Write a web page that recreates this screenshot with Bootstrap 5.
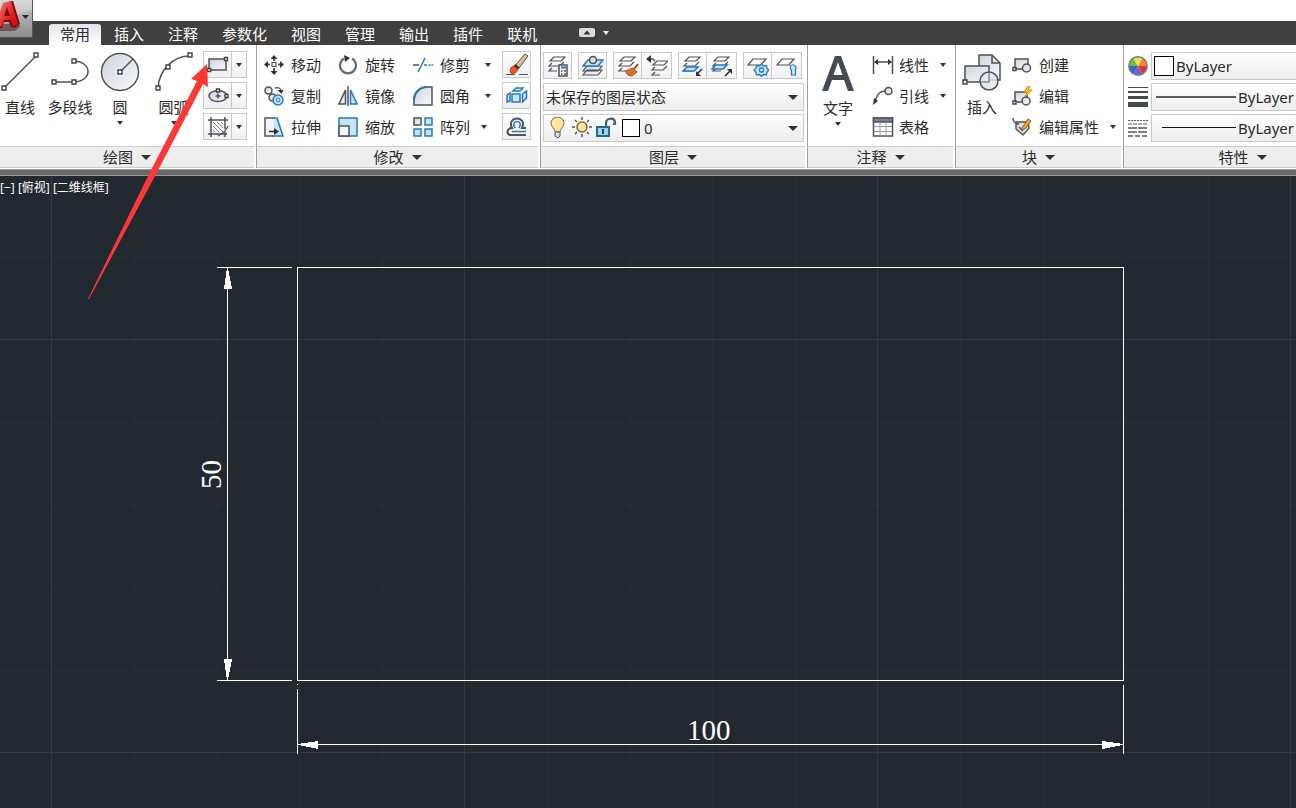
<!DOCTYPE html>
<html lang="zh-CN">
<head>
<meta charset="utf-8">
<meta name="viewport" content="width=device-width, initial-scale=1">
<title>CAD</title>
<link href="https://cdn.jsdelivr.net/npm/bootstrap@5.3.0/dist/css/bootstrap.min.css" rel="stylesheet">
<style>
body{font-family:"Noto Sans","Noto Sans CJK SC",sans-serif;font-size:15px;line-height:20px;color:#2b2b2b;background:#fff}
.app-btn{position:absolute;left:0;top:0;width:33px;height:38px;padding:0;border:0;border-right:1px solid #555;border-bottom:1px solid #555;background:linear-gradient(#c9c9c9,#8d8d8d);z-index:3;overflow:hidden}
.titlebar{height:21px}
.tabbar{background:#404040;height:24px;padding-left:49px}
.tabbar .nav-link{color:#fff;padding:3px 12px 1px;line-height:20px;white-space:nowrap}
.tabbar .nav-link.active{color:#2b2b2b;background:linear-gradient(#e2e4e8,#fff);border-radius:3px 3px 0 0;padding:0 11px 1px;margin:3px 1px 0 0;height:21px}
.ribbon{height:124px;overflow:hidden;background:#fff}
.panel{border-right:1px solid #a0a0a0;height:123px;flex-shrink:0}
.panel-main{height:101px;padding-top:6px}
.panel-title{height:22px;background:#eee;border:0;border-top:1px solid #ccc;border-bottom:1px solid #ccc;color:#2b2b2b;padding:0;margin-right:2px;display:flex;align-items:center;justify-content:center;gap:8px}
.p-draw{width:257px}.p-mod{width:284px}.p-layer{width:267px}.p-note{width:148px}.p-block{width:168px}.p-prop{min-width:240px}
.tool{border:0;background:none;padding:0;color:inherit;display:flex;align-items:center;white-space:nowrap;height:27px}
.tool svg.ic{margin-right:7px}
.tool svg.wide{margin-right:5px}
.tool .caret{margin-left:15px}
.tool .caret.near{margin-left:11px}
.big{border:0;background:none;padding:0;color:inherit;display:flex;flex-direction:column;align-items:center;height:80px;white-space:nowrap}
.big .lbl{margin:5px 0 4px}
.w40{width:40px}.w52{width:52px}.w60{width:60px}.w63{width:63px}
.rows{display:flex;flex-direction:column;gap:4px}
.mod-grid{display:grid;grid-template-columns:74px 75px 89px 29px;grid-auto-rows:27px;row-gap:4px;padding-left:7px}
.box{border:1px solid #c9c9c9;border-radius:0;background:linear-gradient(#fff,#f0f0f0);padding:0;height:27px;width:29px;display:flex;align-items:center;justify-content:center}
.pair{display:flex}
.pair .box + .box{margin-left:-1px;width:31px}
.pair .box + .narrow{width:16px}
.field{border:1px solid #c9c9c9;background:linear-gradient(#fff,#ededed);height:28px;display:flex;align-items:center}
.field select{appearance:none;border:0;outline:0;background:none;color:inherit;height:26px;padding:0 2px;min-width:0;flex:1 1 auto;line-height:20px}
.drop select{background:url("data:image/svg+xml,%3Csvg xmlns='http://www.w3.org/2000/svg' width='10' height='5'%3E%3Cpath d='M0 0h10L5 5z' fill='%23333'/%3E%3C/svg%3E") no-repeat right 5px center}
.layers{padding:7px 3px 0 2px;gap:3px}
.layer-tools{display:flex;justify-content:space-between;height:28px;padding-right:2px}
.prop-row{display:flex;align-items:center;gap:3px}
.swatch{border:1px solid #000;background:#fff;width:20px;height:20px;flex:none;margin-left:2px}
.swatch.sm{width:18px;height:18px;margin-left:4px}
.frame{height:7px;background:#686868;border-top:1px solid #999;border-bottom:1px solid #999}
.canvas{background:#222830;overflow:hidden}
.canvas text{fill:#fff;font-family:"Liberation Serif",serif;font-size:29px}
.view-label{position:absolute;left:0;top:3px;color:#fff;font-size:12px;line-height:18px;white-space:nowrap}
.pointer{position:absolute;left:0;top:0;z-index:5;pointer-events:none}
.ic{flex:none;fill:none;stroke:#4c525b;stroke-width:1.5}
.caret{flex:none;fill:#333}
.nd{fill:#fff;stroke:#3e444d;stroke-width:1.4}
.sh{fill:url(#gs)}
.bl{stroke:#2479bd}
.bf{stroke:#2479bd;fill:#c6e5f8}
.dk{fill:#333;stroke:none}
</style>
</head>
<body class="vh-100 d-flex flex-column overflow-hidden position-relative">
<svg width="0" height="0" class="position-absolute" aria-hidden="true">
<defs>
<linearGradient id="gs" x1="0" y1="0" x2="1" y2="1"><stop offset="0" stop-color="#cfd3dc"/><stop offset="1" stop-color="#fafafc"/></linearGradient>
<linearGradient id="gr" x1="0" y1="0" x2="1" y2="1"><stop offset="0" stop-color="#f4726a"/><stop offset=".6" stop-color="#dc2022"/><stop offset="1" stop-color="#c60d12"/></linearGradient>
<symbol id="c" viewBox="0 0 6 4"><path d="M0 0h6L3 4z"/></symbol>
<symbol id="C" viewBox="0 0 10 5"><path d="M0 0h10L5 5z"/></symbol>
<symbol id="stack" viewBox="0 0 22 22"><path d="M7 2h11l-4 4H3zM5 8l-3 3h11l4-4M5 13l-3 3h8" stroke-width="1.2"/></symbol>
</defs>
</svg>

<button class="app-btn" aria-label="应用程序菜单"><svg width="32" height="37" viewBox="0 0 32 37" class="d-block"><path d="M0 22C12 20 18 12 32 10V0H0z" fill="#fff" opacity=".28"/><path d="M0 31l15 0 6-5-6-2H0z" fill="#3c1515" opacity=".5"/><path d="M10 1h3l7 23-5 4-4-1-2-5H4l-2 6H0V12z" fill="#86070b"/><path fill-rule="evenodd" d="M3 3l8-2 7 23-5 2-2-6H4l-2 6-2 1V12zM4 16h6L7 7z" fill="url(#gr)"/><path d="M22 15h7l-3.500 4z" fill="#25292e"/></svg></button>
<div class="titlebar flex-shrink-0"></div>
<nav class="tabbar flex-shrink-0 d-flex" aria-label="功能区">
<div class="nav flex-nowrap">
<a class="nav-link active" href="#">常用</a><a class="nav-link" href="#">插入</a><a class="nav-link" href="#">注释</a><a class="nav-link" href="#">参数化</a><a class="nav-link" href="#">视图</a><a class="nav-link" href="#">管理</a><a class="nav-link" href="#">输出</a><a class="nav-link" href="#">插件</a><a class="nav-link" href="#">联机</a>
</div>
<button class="tool ms-4 ps-1 h-100" aria-label="最小化"><svg width="34" height="12" viewBox="0 0 34 12"><rect x="2" y="1" width="16" height="9" rx="2" fill="#dcdde3"/><path d="M6.500 7.500h7L10 3.500z" fill="#333"/><path d="M26 4h6l-3 4z" fill="#eee"/></svg></button>
</nav>

<main class="ribbon flex-shrink-0 d-flex">
<section class="panel p-draw d-flex flex-column">
<div class="panel-main d-flex">
<button class="big w40"><svg class="ic" width="40" height="41" viewBox="0 0 40 41"><path d="M4 37L36 5"/><path class="nd" d="M2 35h4v4H2zM34 2h4v4h-4z"/></svg><span class="lbl">直线</span></button>
<button class="big w60"><svg class="ic" width="42" height="41" viewBox="0 0 42 41"><path d="M4 31h20c20 0 20-21 0-21"/><path class="nd" d="M3 29h4v4H3zM23 29h4v4h-4zM23 8h4v4h-4z"/></svg><span class="lbl">多段线</span></button>
<button class="big w40"><svg class="ic" width="40" height="41" viewBox="0 0 40 41"><circle class="sh" cx="20" cy="21" r="18.500"/><path d="M20 21L33 8"/><path class="nd" d="M18 19h4v4h-4z"/></svg><span class="lbl">圆</span><svg class="caret" width="6" height="4"><use href="#c"/></svg></button>
<button class="big w63"><svg class="ic ms-1" width="40" height="41" viewBox="0 0 40 41"><path d="M4 37C5 20 18 5 36 5"/><path class="nd" d="M2 35h4v4H2zM12 14h4v4h-4zM34 2h4v4h-4z"/></svg><span class="lbl ms-1">圆弧</span><svg class="caret ms-1" width="6" height="4"><use href="#c"/></svg></button>
<div class="rows">
<div class="pair"><button class="box" aria-label="矩形"><svg class="ic" width="22" height="20" viewBox="0 0 22 20"><path class="sh" d="M2 4h17v11H2z"/><path class="nd" d="M17.500 2.500h3v3h-3zM.7 13.500h3v3h-3z"/></svg></button><button class="box narrow" aria-label="矩形选项"><svg class="caret" width="6" height="4"><use href="#c"/></svg></button></div>
<div class="pair"><button class="box" aria-label="椭圆"><svg class="ic" width="22" height="20" viewBox="0 0 22 20"><ellipse class="sh" cx="11" cy="10" rx="9" ry="5.500"/><path d="M8.500 10h5M11 7.500v5"/><path class="nd" d="M9.500 3h3v3h-3zM18 8.500h3v3h-3z"/></svg></button><button class="box narrow" aria-label="椭圆选项"><svg class="caret" width="6" height="4"><use href="#c"/></svg></button></div>
<div class="pair"><button class="box" aria-label="图案填充"><svg class="ic" width="22" height="20" viewBox="0 0 22 20"><path d="M1 3h20M1 17h19M4 0v20M18 0v12M18 15v5"/><path d="M6 5l10 10M10 5l6 6M6 9l6 6M14 5l2 2M6 13l2 2" stroke-width=".7"/><path d="M21 9c-2 5-6 8-10 10" stroke-width="1.200"/></svg></button><button class="box narrow" aria-label="填充选项"><svg class="caret" width="6" height="4"><use href="#c"/></svg></button></div>
</div>
</div>
<button class="panel-title">绘图<svg class="caret" width="10" height="5"><use href="#C"/></svg></button>
</section>

<section class="panel p-mod d-flex flex-column">
<div class="panel-main"><div class="mod-grid">
<button class="tool"><svg class="ic" width="20" height="20" viewBox="0 0 20 20"><path d="M8 7.500h4v4H8z" stroke-width="1.200"/><path d="M10 3v3M10 13v4M3 9.500h3M14 9.500h3" stroke-width="2"/><path class="dk" d="M6.500 4h7L10 0zM6.500 16h7L10 20zM4 6v7L0 9.500zM16 6v7l4-3.500z"/></svg>移动</button>
<button class="tool"><svg class="ic" width="20" height="20" viewBox="0 0 20 20"><path d="M6 3.500a8 8 0 1 0 8 0" stroke-width="2.200" stroke="#666b72"/><path class="dk" d="M6 0l6 3-5 4z"/></svg>旋转</button>
<button class="tool"><svg class="ic" width="20" height="20" viewBox="0 0 20 20"><path d="M0 10h6"/><path class="bl" d="M5 17L12 3M11 10h3m1.500 0h2m1 0h2"/></svg>修剪<svg class="caret" width="6" height="4"><use href="#c"/></svg></button>
<button class="box" aria-label="删除"><svg class="ic" width="24" height="24" viewBox="0 0 24 24"><path d="M1 21.500h9M14 21.500h9" stroke-width="1"/><path d="M10.500 12L20 1l3 2-9 12z" fill="#e2be8d" stroke-width="1"/><path d="M9.500 12l4.500 3.500" stroke="#333" stroke-width="2.400"/><path d="M8.500 13l4.500 3.500c-1 3-4 4.500-7 3.500-2-3 0-6 2.500-7z" fill="#e8562a" stroke="#b6330c" stroke-width="1"/></svg></button>
<button class="tool"><svg class="ic wide" width="22" height="20" viewBox="0 0 22 20"><circle class="sh" cx="4.500" cy="4.500" r="3.500"/><circle class="sh" cx="8.500" cy="11.500" r="3.500"/><circle class="bf" cx="14" cy="14" r="5"/><circle class="bl" cx="14" cy="14" r="2" stroke-width="1"/><path d="M11 2c4-1 5 0 6 2"/><path class="dk" d="M13.500 4h6l-2 4z"/></svg>复制</button>
<button class="tool"><svg class="ic" width="20" height="20" viewBox="0 0 20 20"><path class="sh" d="M7.500 4v14H1z"/><path d="M10 0v20"/><path class="bf" d="M12.500 4v14H19z"/></svg>镜像</button>
<button class="tool"><svg class="ic" width="20" height="20" viewBox="0 0 20 20"><path class="sh" d="M1 19V12C3 6 7 2 12 1h7v18z"/><path class="bl" d="M1 14C1 6 7 1 14 1" stroke-width="2"/></svg>圆角<svg class="caret" width="6" height="4"><use href="#c"/></svg></button>
<button class="box" aria-label="分解"><svg class="ic" width="22" height="20" viewBox="0 0 22 20"><path class="bf" d="M6 8h8v8H6zM7 5l3-3h7l-3 3zM16.500 8l4-3v7l-4 4zM1 9l3-2v8l-3 1z" stroke-width="1.500"/></svg></button>
<button class="tool"><svg class="ic" width="20" height="20" viewBox="0 0 20 20"><path class="bf" d="M9 1h4l6 18H9z"/><path fill="#f4f5f8" stroke="none" d="M1 1h9v18H1z"/><path d="M10 1H1v18h9"/><path d="M5 14.500h6" stroke="#222"/><path class="dk" d="M10 11l5 3.500-5 3.500z"/></svg>拉伸</button>
<button class="tool"><svg class="ic" width="20" height="20" viewBox="0 0 20 20"><path class="bf" d="M1 1h18v18H1z"/><path fill="#f6f7fa" d="M1 9h10v10H1z"/></svg>缩放</button>
<button class="tool"><svg class="ic" width="20" height="20" viewBox="0 0 20 20"><path class="sh" d="M1 1h7v7H1z"/><path class="bf" d="M12 1h7v7h-7zM1 12h7v7H1zM12 12h7v7h-7z"/></svg>阵列<svg class="caret near" width="6" height="4"><use href="#c"/></svg></button>
<button class="box" aria-label="偏移"><svg class="ic" width="22" height="20" viewBox="0 0 22 20"><path d="M20 18H4c-4-1-3-7 2-7C3 5 7 1.500 11 1.500s8 3.500 5 9.500h4" stroke-width="2"/><path class="bl" d="M20 14.500H6M9 11C6 6 9 4.500 11 4.500S16 6 13 11" /></svg></button>
</div></div>
<button class="panel-title">修改<svg class="caret" width="10" height="5"><use href="#C"/></svg></button>
</section>

<section class="panel p-layer d-flex flex-column">
<div class="panel-main d-flex flex-column layers">
<div class="layer-tools">
<button class="box" aria-label="图层特性"><svg class="ic" width="22" height="22"><use href="#stack"/><path d="M12 10h8v11h-8z" fill="#edf3fa"/><path class="bl" d="M14 12.500h5" stroke-width="2"/><path d="M14 16h1.500M17 16h2M14 19h1.500M17 19h2"/></svg></button>
<button class="box" aria-label="置为当前"><svg class="ic" width="22" height="22" viewBox="0 0 22 22"><path class="sh" d="M5 15h15l-4 5H1zM5 11h15l-4 5H1z" stroke-width="1.200"/><path class="bf" d="M6 5h15l-5 6H1z"/><circle cx="11" cy="5" r="3.500" fill="#ddd"/></svg></button>
<div class="pair"><button class="box" aria-label="匹配图层"><svg class="ic" width="22" height="22"><use href="#stack"/><path d="M21 9l-4 5" stroke="#9b4a12" stroke-width="2"/><path d="M8 16l8-3 4 4-5 4-4-1z" fill="#d9702b" stroke="#a5571c" stroke-width="1"/></svg></button><button class="box" aria-label="上一个图层"><svg class="ic" width="22" height="22"><use href="#stack" x="4" y="4"/><path d="M3 4h4l2 2"/><path class="dk" d="M0 4l5-4v8z"/></svg></button></div>
<div class="pair"><button class="box" aria-label="隔离"><svg class="ic" width="22" height="22"><use href="#stack"/><path class="bf" d="M5 12h11l-4 4H1z"/><path d="M20 14l-5 5" stroke="#222"/><path class="dk" d="M14 16v5h5z"/></svg></button><button class="box" aria-label="取消隔离"><svg class="ic" width="22" height="22"><use href="#stack"/><path class="bf" d="M5 10h11l-4 4H1z"/><path d="M14 21l5-5" stroke="#222"/><path class="dk" d="M16 14h5v5z"/></svg></button></div>
<div class="pair"><button class="box" aria-label="冻结"><svg class="ic" width="22" height="22"><path d="M6 4h13l-5 6H1z" stroke-width="1.200"/><path class="bf" d="M14.500 9l2 2 3-.5.5 3 2 1.500-2 2-.5 3-3-.5-2 2-2-2-3 .5-.5-3-2-2 2-1.500.5-3 3 .5z" stroke-width="1.300"/><circle cx="14.500" cy="15" r="2" fill="#fff" class="bl"/></svg></button><button class="box" aria-label="关闭图层"><svg class="ic" width="22" height="22"><path d="M6 4h12l-5 6H1z" stroke-width="1.200"/><path class="bf" d="M15.500 15c-5-7 7-7 4 0v5h-4z" stroke-width="1.200"/></svg></button></div>
</div>
<div class="field drop"><select aria-label="图层状态"><option>未保存的图层状态</option></select></div>
<div class="field drop"><svg class="ic ms-1" width="70" height="22" viewBox="0 0 70 22"><path d="M7 15C7 11 3 10 3 6.500a6.500 6.500 0 0 1 13 0c0 3.500-4 4.500-4 8.500z" fill="#ffe6a0" stroke="#806a3c" stroke-width="1"/><path d="M7 15h5v4l-2 2-3-2z" fill="#ddd" stroke-width="1"/><circle cx="34" cy="10" r="5" fill="#ffe7a0" stroke="#806a3c"/><path d="M34 0v3M34 17v3M24 10h3M41 10h3M27 3l2 2M39 15l2 2M41 3l-2 2M29 15l-2 2"/><path d="M49 10h12v9H49z" fill="#9cd2ea" stroke="#236b8d" stroke-width="2"/><path d="M55 12v5" stroke="#174b66" stroke-width="2"/><path d="M58 9V6c0-5 8-6 9-1v2h-2" stroke="#3c6474" stroke-width="2.200"/></svg><span class="swatch sm"></span><select class="ps-1" aria-label="当前图层"><option>0</option></select></div>
</div>
<button class="panel-title">图层<svg class="caret" width="10" height="5"><use href="#C"/></svg></button>
</section>

<section class="panel p-note d-flex flex-column">
<div class="panel-main d-flex">
<button class="big w60"><svg class="ic" width="34" height="42" viewBox="0 0 34 42"><path fill="#454b54" stroke="none" fill-rule="evenodd" d="M1 40L14 5h6l13 35h-6l-4-11H11L7 40zM12.500 24h9L17 11z"/></svg><span class="lbl">文字</span><svg class="caret" width="6" height="4"><use href="#c"/></svg></button>
<div class="rows ps-1">
<button class="tool"><svg class="ic wide" width="22" height="20" viewBox="0 0 22 20"><path d="M1.500 1v18M20.500 1v18M3 7h16"/><path class="dk" d="M2 7l4-3v6zM20 7l-4-3v6z"/></svg>线性<svg class="caret near" width="6" height="4"><use href="#c"/></svg></button>
<button class="tool"><svg class="ic wide" width="22" height="20" viewBox="0 0 22 20"><path d="M3 15C6 7 8 5 14 5"/><circle class="sh" cx="16.500" cy="5" r="3.500"/><path class="dk" d="M1 19l1-7 4 3z"/></svg>引线<svg class="caret near" width="6" height="4"><use href="#c"/></svg></button>
<button class="tool"><svg class="ic wide" width="22" height="20" viewBox="0 0 22 20"><path fill="#fff" d="M1.500 1h19v18h-19z"/><path fill="#788493" d="M1.500 1h19v4h-19z"/><path d="M2 9.500h18M2 14.500h18M8 5v14M14 5v14" stroke="#999" stroke-width="1"/></svg>表格</button>
</div>
</div>
<button class="panel-title">注释<svg class="caret" width="10" height="5"><use href="#C"/></svg></button>
</section>

<section class="panel p-block d-flex flex-column">
<div class="panel-main d-flex">
<button class="big w52"><svg class="ic" width="40" height="41" viewBox="0 0 40 41"><path class="sh" d="M17 4h13l8 8v17H17z"/><path d="M30 4v8h8"/><path class="sh" d="M3 15h24v16H3z"/><circle cx="27" cy="30" r="9" fill="#e2e5eb" fill-opacity=".8"/><path d="M19 31h8v-9" stroke="#8e939b"/><path class="nd" d="M1 29h4v4H1z"/></svg><span class="lbl">插入</span></button>
<div class="rows ps-1">
<button class="tool"><svg class="ic" width="20" height="20" viewBox="0 0 20 20"><path class="sh" d="M3 4h13v10H3z"/><circle class="sh" cx="14.500" cy="13" r="4"/><path class="nd" d="M1 12.500h3v3H1z"/></svg>创建</button>
<button class="tool"><svg class="ic" width="20" height="20" viewBox="0 0 20 20"><path class="sh" d="M3 6h12v10H3z"/><circle class="sh" cx="14" cy="15" r="4"/><path class="nd" d="M1 15h3v3H1z"/><path d="M16 0l-4 6h3l-2 5 7-7h-4l2-4z" fill="#ffc530" stroke="#e58b10" stroke-width="1"/></svg>编辑</button>
<button class="tool"><svg class="ic" width="20" height="20" viewBox="0 0 20 20"><path class="sh" d="M4 5h12l1 6-6 7-7-6z"/><path d="M1 1c0 4 3 6 6 6M7 10l4 4"/><path d="M10 11l6-9 3 2-6 8-4 1z" fill="#f5a62c" stroke="#965716" stroke-width="1"/></svg>编辑属性<svg class="caret near" width="6" height="4"><use href="#c"/></svg></button>
</div>
</div>
<button class="panel-title">块<svg class="caret" width="10" height="5"><use href="#C"/></svg></button>
</section>

<section class="panel p-prop d-flex flex-column flex-grow-1">
<div class="panel-main layers d-flex flex-column ps-1">
<div class="prop-row"><svg width="20" height="20" viewBox="-10 -10 20 20" class="flex-shrink-0"><path d="M0 0L-9 0A9 9 0 0 1-4.500-7.800z" fill="#6fbf45"/><path d="M0 0L-4.500-7.800A9 9 0 0 1 4.500-7.800z" fill="#f3dd52"/><path d="M0 0L4.500-7.800A9 9 0 0 1 9 0z" fill="#f58a2b"/><path d="M0 0L9 0A9 9 0 0 1 4.500 7.800z" fill="#e23429"/><path d="M0 0L4.500 7.800A9 9 0 0 1-4.500 7.800z" fill="#8c56c6"/><path d="M0 0L-4.500 7.800A9 9 0 0 1-9 0z" fill="#2f67d3"/><circle r="9.200" fill="none" stroke="#70757f" stroke-width="1.400"/></svg><div class="field flex-fill"><span class="swatch"></span><select aria-label="颜色"><option>ByLayer</option></select></div></div>
<div class="prop-row"><svg width="20" height="20" class="flex-shrink-0"><path d="M0 0h20v1H0zM0 4h20v2H0zM0 9h20v3H0zM0 15h20v5H0z" fill="#454a52"/></svg><div class="field flex-fill"><svg width="82" height="4" class="ms-1 flex-shrink-0"><path d="M0 1h80v2H0z" fill="#5c5f5f"/></svg><select class="ps-0" aria-label="线宽"><option>ByLayer</option></select></div></div>
<div class="prop-row"><svg width="20" height="20" class="flex-shrink-0"><path d="M0 2.500h20" stroke="#555" stroke-dasharray="2 1"/><path d="M0 6h20" stroke="#555" stroke-dasharray="4 1"/><path d="M0 10h20M0 14h20" stroke="#555" stroke-width="1.500" stroke-dasharray="9 1"/><path d="M0 18h20" stroke="#555" stroke-width="1.500" stroke-dasharray="5 2"/></svg><div class="field flex-fill"><svg width="82" height="4" class="ms-1 flex-shrink-0"><path d="M6 1h74v1H6z" fill="#111"/></svg><select class="ps-0" aria-label="线型"><option>ByLayer</option></select></div></div>
</div>
<button class="panel-title">特性<svg class="caret" width="10" height="5"><use href="#C"/></svg></button>
</section>
</main>
<div class="frame flex-shrink-0"></div>

<div class="canvas flex-grow-1 position-relative">
<div class="view-label">[−] [俯视] [二维线框]</div>
<svg width="100%" height="100%" class="d-block" shape-rendering="crispEdges">
<defs><pattern id="grid" x="51" y="163" width="413" height="413" patternUnits="userSpaceOnUse"><path d="M83 0h1v413h-1zM166 0h1v413h-1zM248 0h1v413h-1zM331 0h1v413h-1zM0 83h413v1H0zM0 165h413v1H0zM0 248h413v1H0zM0 331h413v1H0z" fill="#262d39"/><path d="M0 0h413v1H0zM0 0h1v413H0z" fill="#323a4a"/></pattern></defs>
<rect width="100%" height="100%" fill="url(#grid)"/>
<path d="M297.500 91.500h826v413h-826zM217 91.500h75M217 504.500h75M227.500 91v413M297.500 513v65M1123.500 509v69M298 568.500h825M297 508.500h1" fill="none" stroke="#fff"/>
<path d="M227 92h1l4 21h-8zM227 504h1l4-21h-8zM298 568v1l20 4v-8zM1123 568v1l-21 4v-8z" fill="#fff"/>
<text x="687" y="564">100</text>
<text transform="translate(221 313) rotate(-90)">50</text>
</svg>
</div>
<svg class="pointer" width="220" height="305" aria-hidden="true"><path d="M207 64L191 79l6 2L147 178 88 299h1L154 178 203 84l5 3z" fill="#fd3735"/></svg>
<script src="https://cdn.jsdelivr.net/npm/bootstrap@5.3.0/dist/js/bootstrap.bundle.min.js"></script>
</body>
</html>
